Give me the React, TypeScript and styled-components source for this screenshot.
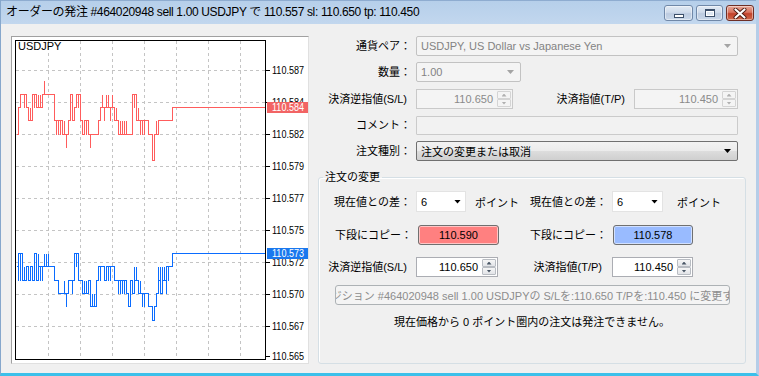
import React from "react";
import styled, { createGlobalStyle } from "styled-components";

const GlobalStyle = createGlobalStyle`
  html, body {
    margin: 0;
    padding: 0;
    background: #ffffff;
  }
  body {
    font-family: "Liberation Sans", "Noto Sans CJK JP", sans-serif;
    font-size: 11px;
    color: #000;
  }
  * {
    box-sizing: border-box;
  }
`;

// price tick offsets for the two step lines, [x, ticks from the last price]
const redTicks: [number, number][] = [
  [16, -2], [17, 0], [19, 0], [20, 1], [22, 1], [23, 0], [24, 1], [25, 0], [27, 0], [28, -1],
  [29, 0], [30, -1], [31, 0], [32, 1], [33, 0], [34, 1], [36, 0], [37, 1], [38, 0], [39, 1],
  [40, 0], [41, 1], [43, 2], [44, 1], [53, 1], [54, -1], [55, -2], [56, -1], [57, -2], [58, -1],
  [59, -2], [60, -1], [61, -2], [63, -1], [64, -2], [65, -3], [66, -2], [67, -1], [69, 0], [70, 1],
  [71, 0], [72, -1], [73, 0], [75, 1], [77, 0], [78, 1], [79, 0], [80, -1], [81, -2], [84, -1],
  [85, -2], [86, -1], [87, -2], [89, -3], [90, -2], [98, -1], [99, 0], [101, 1], [102, 0], [103, -1],
  [104, 0], [105, 1], [106, 0], [107, 1], [108, 0], [109, -1], [110, 0], [111, 1], [112, 0], [113, -1],
  [115, 0], [116, -1], [118, -2], [119, -1], [120, -2], [121, -1], [122, -2], [123, -1], [124, -2],
  [125, -1], [126, -2], [132, 1], [133, 0], [134, 1], [135, 0], [136, -1], [137, 0], [138, -1],
  [139, -2], [140, -1], [141, -2], [142, -1], [143, -2], [144, -1], [148, -2], [151, -3], [152, -4],
  [153, -3], [154, -2], [155, -1], [156, -2], [157, -1], [171, 0],
];

const blueTicks: [number, number][] = [
  [16, -1], [17, -2], [18, 0], [19, -2], [20, 0], [21, -1], [22, -2], [23, -1], [24, -2], [25, -1],
  [28, -2], [29, -1], [32, -2], [33, -1], [34, 0], [35, -1], [36, -2], [37, 0], [38, -1], [39, -2],
  [40, -1], [41, -2], [42, -1], [43, 0], [44, -1], [45, 0], [46, -1], [47, 0], [48, -1], [53, -2],
  [58, -3], [63, -2], [64, -3], [65, -4], [66, -3], [67, -2], [71, -3], [72, -2], [73, -1], [74, 0],
  [75, -1], [76, 0], [77, -1], [78, -2], [82, -3], [83, -2], [84, -3], [85, -2], [86, -3], [87, -2],
  [89, -3], [90, -4], [91, -3], [92, -4], [93, -3], [94, -4], [95, -3], [96, -2], [98, -1], [99, -2],
  [100, -1], [104, -2], [106, -1], [107, -2], [108, -1], [109, -2], [110, -1], [114, -2], [117, -3],
  [118, -2], [119, -3], [120, -2], [121, -3], [122, -2], [123, -3], [124, -2], [126, -3], [128, -4],
  [129, -3], [130, -2], [132, -3], [133, -1], [134, -2], [135, -1], [136, -2], [138, -3], [139, -2],
  [140, -3], [141, -4], [142, -3], [143, -4], [144, -3], [147, -4], [151, -5], [153, -4], [156, -3],
  [157, -1], [158, -2], [159, -1], [160, -3], [161, -1], [162, -2], [163, -1], [164, -2], [165, -3],
  [166, -1], [167, -2], [168, -1], [171, 0],
];

// ticks land on every second column so the strokes read as thin bars
const buildPath = (ticks: [number, number][], baseY: number) => {
  const y = (k: number) => Math.round(baseY - k * 13.3) + 0.5;
  const col = (x: number) => 16 + 2 * Math.round((x - 16) / 2) + 0.5;
  let d = `M${col(ticks[0][0])} ${y(ticks[0][1])}`;
  for (let i = 1; i < ticks.length; i++) {
    d += ` H${col(ticks[i][0])} V${y(ticks[i][1])}`;
  }
  return d + " H265";
};

const priceLabels: [number, string][] = [
  [71, "110.587"], [103, "110.584"], [135, "110.582"], [167, "110.579"], [199, "110.577"],
  [231, "110.575"], [263, "110.572"], [295, "110.570"], [327, "110.567"], [357, "110.565"],
];

const gridX = [48, 80, 112, 144, 176, 208, 240];

const App = () => {
  return (
    <>
      <GlobalStyle />
      <Window>
        <TitleBar>
          <TitleText>
            オーダーの発注 #464020948 sell 1.00 USDJPY で 110.557 sl: 110.650 tp: 110.450
          </TitleText>
          <CaptionButtons>
            <CaptionButton $w={29}>
              <MinGlyph />
            </CaptionButton>
            <CaptionButton $w={27}>
              <MaxGlyph />
            </CaptionButton>
            <CaptionButton $w={28} $close>
              <svg width="14" height="11" viewBox="0 0 14 11">
                <path
                  d="M2.5 1.5 L11.5 9.5 M11.5 1.5 L2.5 9.5"
                  stroke="#4a1a12"
                  strokeWidth="4"
                  strokeLinecap="round"
                />
                <path
                  d="M2.5 1.5 L11.5 9.5 M11.5 1.5 L2.5 9.5"
                  stroke="#ffffff"
                  strokeWidth="2.2"
                  strokeLinecap="round"
                />
              </svg>
            </CaptionButton>
          </CaptionButtons>
        </TitleBar>

        <Body>
          <ChartPanel>
            <svg width="296" height="325" style={{ display: "block" }}>
              <g transform="translate(-12,-38)" shapeRendering="crispEdges">
                {priceLabels.slice(0, 9).map(([py]) => (
                  <line
                    key={`h${py}`}
                    x1={16}
                    x2={265}
                    y1={py + 0.5}
                    y2={py + 0.5}
                    stroke="#c4c4c4"
                    strokeDasharray="3 3"
                  />
                ))}
                {gridX.map((gx) => (
                  <line
                    key={`v${gx}`}
                    x1={gx + 0.5}
                    x2={gx + 0.5}
                    y1={42}
                    y2={360}
                    stroke="#c4c4c4"
                    strokeDasharray="3 3"
                  />
                ))}
                <rect x={15.5} y={41.5} width={250} height={319} fill="none" stroke="#000" />
                {priceLabels.map(([py]) => (
                  <line key={`t${py}`} x1={266} x2={270} y1={py + 0.5} y2={py + 0.5} stroke="#000" />
                ))}
                <path d={buildPath(redTicks, 108)} fill="none" stroke="#ff5c5c" strokeWidth={1} />
                <path d={buildPath(blueTicks, 254)} fill="none" stroke="#0a6cff" strokeWidth={1} />
              </g>
              <g transform="translate(-12,-38)" fontFamily="Liberation Sans, sans-serif" fontSize="11">
                <text x={18} y={51} fill="#000">USDJPY</text>
                {priceLabels.map(([py, label]) => (
                  <text
                    key={label}
                    x={272}
                    y={py + 4}
                    fill="#000"
                    textLength={32}
                    lengthAdjust="spacingAndGlyphs"
                  >
                    {label}
                  </text>
                ))}
                <rect x={267} y={103} width={42} height={11} fill="#f26464" />
                <text x={272} y={112} fill="#fff" textLength={32} lengthAdjust="spacingAndGlyphs">
                  110.584
                </text>
                <rect x={267} y={249} width={42} height={11} fill="#1a78ee" />
                <text x={272} y={258} fill="#fff" textLength={32} lengthAdjust="spacingAndGlyphs">
                  110.573
                </text>
              </g>
            </svg>
          </ChartPanel>

          <RightPanel>
            <FormRow>
              <FieldLabel $w={104}>通貨ペア：</FieldLabel>
              <SelectBox $w={322} $disabled>
                <SelectText $disabled>USDJPY, US Dollar vs Japanese Yen</SelectText>
                <Arrow $color="#a4a4a4" />
              </SelectBox>
            </FormRow>

            <FormRow $mt={6}>
              <FieldLabel $w={104}>数量：</FieldLabel>
              <SelectBox $w={105} $disabled>
                <SelectText $disabled>1.00</SelectText>
                <Arrow $color="#a4a4a4" />
              </SelectBox>
            </FormRow>

            <FormRow $mt={7}>
              <FieldLabel $w={104} $pr={9}>決済逆指値(S/L)</FieldLabel>
              <SpinBox $w={97} $disabled>
                <SpinValue $disabled>110.650</SpinValue>
                <SpinButtons>
                  <SpinArrow $up $disabled />
                  <SpinArrow $disabled />
                </SpinButtons>
              </SpinBox>
              <FieldLabel $w={121} $pr={9}>決済指値(T/P)</FieldLabel>
              <SpinBox $w={104} $disabled>
                <SpinValue $disabled>110.450</SpinValue>
                <SpinButtons>
                  <SpinArrow $up $disabled />
                  <SpinArrow $disabled />
                </SpinButtons>
              </SpinBox>
            </FormRow>

            <FormRow $mt={6}>
              <FieldLabel $w={104}>コメント：</FieldLabel>
              <TextBox $w={322} />
            </FormRow>

            <FormRow $mt={6}>
              <FieldLabel $w={104}>注文種別：</FieldLabel>
              <SelectBox $w={322}>
                <SelectText>注文の変更または取消</SelectText>
                <Arrow $color="#000" />
              </SelectBox>
            </FormRow>

            <Group>
              <Legend>注文の変更</Legend>

              <GroupRow $mt={7} $h={21}>
                <Half $w={179}>
                  <FieldLabel $w={97}>現在値との差：</FieldLabel>
                  <ComboBox $w={50}>
                    <span>6</span>
                    <Arrow $color="#000" />
                  </ComboBox>
                  <Suffix $ml={9}>ポイント</Suffix>
                </Half>
                <Half>
                  <FieldLabel $w={114}>現在値との差：</FieldLabel>
                  <ComboBox $w={51}>
                    <span>6</span>
                    <Arrow $color="#000" />
                  </ComboBox>
                  <Suffix $ml={14}>ポイント</Suffix>
                </Half>
              </GroupRow>

              <GroupRow $mt={13} $h={20}>
                <Half $w={179}>
                  <FieldLabel $w={98}>下段にコピー：</FieldLabel>
                  <ColorButton $w={81} $bg="#ff8080">110.590</ColorButton>
                </Half>
                <Half>
                  <FieldLabel $w={114}>下段にコピー：</FieldLabel>
                  <ColorButton $w={80} $bg="#99bbff">110.578</ColorButton>
                </Half>
              </GroupRow>

              <GroupRow $mt={12} $h={20}>
                <Half $w={179}>
                  <FieldLabel $w={97} $pr={9}>決済逆指値(S/L)</FieldLabel>
                  <SpinBox $w={82}>
                    <SpinValue>110.650</SpinValue>
                    <SpinButtons>
                      <SpinArrow $up />
                      <SpinArrow />
                    </SpinButtons>
                  </SpinBox>
                </Half>
                <Half>
                  <FieldLabel $w={114} $pr={10}>決済指値(T/P)</FieldLabel>
                  <SpinBox $w={81}>
                    <SpinValue>110.450</SpinValue>
                    <SpinButtons>
                      <SpinArrow $up />
                      <SpinArrow />
                    </SpinButtons>
                  </SpinBox>
                </Half>
              </GroupRow>

              <GroupRow $mt={8} $h={20}>
                <ModifyButton>
                  <span>
                    ポジション #464020948 sell 1.00 USDJPYの S/Lを:110.650 T/Pを:110.450 に変更する
                  </span>
                </ModifyButton>
              </GroupRow>

              <Notice>現在価格から 0 ポイント圏内の注文は発注できません。</Notice>
            </Group>
          </RightPanel>
        </Body>
      </Window>
    </>
  );
};

export default App;

const Window = styled.div`
  width: 759px;
  height: 376px;
  display: flex;
  flex-direction: column;
  background: #f0f0f0;
  border-left: 1px solid #86a7cc;
  border-right: 3px solid #b5cde8;
  border-bottom: 3px solid #3cc0ea;
  overflow: hidden;
`;

const TitleBar = styled.div`
  height: 24px;
  flex: none;
  display: flex;
  align-items: flex-start;
  background: linear-gradient(#b6cfea, #c2d7ee);
  border-top: 1px solid #8eacd0;
`;

const TitleText = styled.div`
  font-size: 12px;
  line-height: 16px;
  letter-spacing: -0.35px;
  margin: 3px 0 0 5px;
  white-space: nowrap;
  color: #000;
`;

const CaptionButtons = styled.div`
  display: flex;
  gap: 3px;
  margin: 4px 2px 0 auto;
`;

const CaptionButton = styled.div<{ $w: number; $close?: boolean }>`
  width: ${({ $w }) => $w}px;
  height: 16px;
  border-radius: 3px;
  border: 1px solid ${({ $close }) => ($close ? "#6e2f26" : "#7088a8")};
  background: ${({ $close }) =>
    $close
      ? "linear-gradient(#e6a898, #d8735f 45%, #c2412a 55%, #d06a4c)"
      : "linear-gradient(#e2eaf4, #cfdbeb 45%, #bccbe0 55%, #cad8ea)"};
  box-shadow: inset 0 0 0 1px rgba(255, 255, 255, 0.45);
  display: flex;
  align-items: center;
  justify-content: center;
`;

const MinGlyph = styled.span`
  width: 10px;
  height: 4px;
  margin-top: 5px;
  background: #fff;
  border: 1px solid #3c4f6a;
`;

const MaxGlyph = styled.span`
  width: 10px;
  height: 8px;
  background: #dfe8f3;
  border: 1px solid #3c4f6a;
  border-top-width: 2px;
  box-shadow: inset 0 0 0 1px #fff;
`;

const Body = styled.div`
  flex: 1;
  min-height: 0;
  display: flex;
  padding: 12px 0 9px 10px;
`;

const ChartPanel = styled.div`
  width: 298px;
  flex: none;
  background: #fff;
  border: 1px solid;
  border-color: #a0a0a0 #e0e0e0 #e0e0e0 #a0a0a0;
  overflow: hidden;
`;

const RightPanel = styled.div`
  flex: 1;
  display: flex;
  flex-direction: column;
  margin-left: 3px;
`;

const FormRow = styled.div<{ $mt?: number }>`
  display: flex;
  align-items: center;
  height: 20px;
  margin-top: ${({ $mt }) => $mt ?? 0}px;
`;

const FieldLabel = styled.div<{ $w: number; $pr?: number }>`
  width: ${({ $w }) => $w}px;
  flex: none;
  text-align: right;
  padding-right: ${({ $pr }) => $pr ?? 5}px;
  white-space: nowrap;
  line-height: 14px;
`;

const SelectBox = styled.div<{ $w: number; $disabled?: boolean }>`
  width: ${({ $w }) => $w}px;
  height: 20px;
  display: flex;
  align-items: center;
  padding: 0 6px 0 4px;
  border-radius: 2px;
  border: 1px solid ${({ $disabled }) => ($disabled ? "#c2c2c2" : "#707070")};
  background: ${({ $disabled }) =>
    $disabled ? "#f4f4f4" : "linear-gradient(#f2f2f2, #ebebeb 50%, #dddddd 51%, #cfcfcf)"};
`;

const SelectText = styled.span<{ $disabled?: boolean }>`
  flex: 1;
  white-space: nowrap;
  overflow: hidden;
  color: ${({ $disabled }) => ($disabled ? "#838383" : "#000")};
`;

const Arrow = styled.span<{ $color: string }>`
  width: 7px;
  height: 4px;
  flex: none;
  background: ${({ $color }) => $color};
  clip-path: polygon(0 0, 100% 0, 50% 100%);
`;

const SpinBox = styled.div<{ $w: number; $disabled?: boolean }>`
  width: ${({ $w }) => $w}px;
  height: 20px;
  flex: none;
  display: flex;
  padding: 1px;
  border: 1px solid ${({ $disabled }) => ($disabled ? "#c9c9c9" : "#abadb3")};
  background: ${({ $disabled }) => ($disabled ? "#f4f4f4" : "#fff")};
`;

const SpinValue = styled.div<{ $disabled?: boolean }>`
  flex: 1;
  text-align: right;
  padding-right: 4px;
  line-height: 16px;
  color: ${({ $disabled }) => ($disabled ? "#8a8a8a" : "#000")};
`;

const SpinButtons = styled.div`
  width: 14px;
  display: flex;
  flex-direction: column;
`;

const SpinArrow = styled.div<{ $up?: boolean; $disabled?: boolean }>`
  flex: 1;
  display: flex;
  align-items: center;
  justify-content: center;
  border: 1px solid ${({ $disabled }) => ($disabled ? "#d4d4d4" : "#b8bcc2")};
  border-radius: 1px;
  background: ${({ $disabled }) =>
    $disabled ? "#f4f4f4" : "linear-gradient(#f6f6f6, #e2e4e8)"};
  &::after {
    content: "";
    width: 5px;
    height: 3px;
    background: ${({ $disabled }) => ($disabled ? "#b0b0b0" : "#4a5766")};
    clip-path: ${({ $up }) =>
      $up ? "polygon(50% 0, 100% 100%, 0 100%)" : "polygon(0 0, 100% 0, 50% 100%)"};
  }
`;

const TextBox = styled.div<{ $w: number }>`
  width: ${({ $w }) => $w}px;
  height: 19px;
  border: 1px solid #cbcbcb;
  border-radius: 1px;
  background: #f2f2f2;
`;

const Group = styled.fieldset`
  flex: 1;
  margin: 9px 10px 0 6px;
  padding: 0;
  min-width: 0;
  display: flex;
  flex-direction: column;
  border: 1px solid #d5dfe5;
  border-radius: 3px;
  box-shadow: inset 1px 1px 0 #fff;
`;

const Legend = styled.legend`
  margin-left: 4px;
  padding: 0 2px;
  line-height: 14px;
  font-size: 11px;
`;

const GroupRow = styled.div<{ $mt: number; $h: number }>`
  display: flex;
  align-items: center;
  height: ${({ $h }) => $h}px;
  margin-top: ${({ $mt }) => $mt}px;
`;

const Half = styled.div<{ $w?: number }>`
  display: flex;
  align-items: center;
  height: 100%;
  ${({ $w }) => ($w ? `width: ${$w}px; flex: none;` : "flex: 1;")}
`;

const ComboBox = styled.div<{ $w: number }>`
  width: ${({ $w }) => $w}px;
  height: 21px;
  flex: none;
  display: flex;
  align-items: center;
  justify-content: space-between;
  padding: 0 4px 0 4px;
  background: #fff;
  border: 1px solid #e3e3e3;
`;

const Suffix = styled.span<{ $ml: number }>`
  margin-left: ${({ $ml }) => $ml}px;
  white-space: nowrap;
`;

const ColorButton = styled.div<{ $w: number; $bg: string }>`
  width: ${({ $w }) => $w}px;
  height: 20px;
  flex: none;
  display: flex;
  align-items: center;
  justify-content: center;
  margin-left: 1px;
  background: ${({ $bg }) => $bg};
  border: 1px solid #707070;
  border-radius: 3px;
  box-shadow: inset 0 0 0 1px rgba(255, 255, 255, 0.55);
`;

const ModifyButton = styled.div`
  width: 395px;
  height: 20px;
  margin: 0 auto;
  display: flex;
  align-items: center;
  justify-content: center;
  overflow: hidden;
  white-space: nowrap;
  color: #8d8d8d;
  background: #f4f4f4;
  border: 1px solid #adb2b5;
  border-radius: 3px;
  & > span {
    flex: none;
  }
`;

const Notice = styled.div`
  margin-top: 10px;
  text-align: center;
  line-height: 14px;
`;
